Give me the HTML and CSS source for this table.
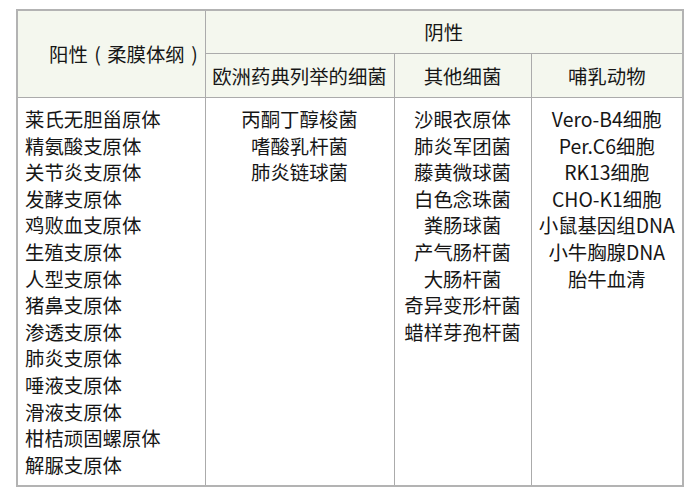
FILE: index.html
```html
<!DOCTYPE html>
<html lang="zh">
<head>
<meta charset="utf-8">
<link rel="stylesheet" href="styles.css">
</head>
<body>
<table class="grid">
  <colgroup>
    <col class="c1"><col class="c2"><col class="c3"><col class="c4">
  </colgroup>
  <thead>
    <tr class="h1">
      <th rowspan="2" class="pos">阳性<span class="paren">(</span>柔膜体纲<span class="paren">)</span></th>
      <th colspan="3">阴性</th>
    </tr>
    <tr class="h2">
      <th>欧洲药典列举的细菌</th>
      <th>其他细菌</th>
      <th>哺乳动物</th>
    </tr>
  </thead>
  <tbody>
    <tr>
      <td class="left">
        <div>莱氏无胆甾原体</div>
        <div>精氨酸支原体</div>
        <div>关节炎支原体</div>
        <div>发酵支原体</div>
        <div>鸡败血支原体</div>
        <div>生殖支原体</div>
        <div>人型支原体</div>
        <div>猪鼻支原体</div>
        <div>渗透支原体</div>
        <div>肺炎支原体</div>
        <div>唾液支原体</div>
        <div>滑液支原体</div>
        <div>柑桔顽固螺原体</div>
        <div>解脲支原体</div>
      </td>
      <td class="mid">
        <div>丙酮丁醇梭菌</div>
        <div>嗜酸乳杆菌</div>
        <div>肺炎链球菌</div>
      </td>
      <td class="mid">
        <div>沙眼衣原体</div>
        <div>肺炎军团菌</div>
        <div>藤黄微球菌</div>
        <div>白色念珠菌</div>
        <div>粪肠球菌</div>
        <div>产气肠杆菌</div>
        <div>大肠杆菌</div>
        <div>奇异变形杆菌</div>
        <div>蜡样芽孢杆菌</div>
      </td>
      <td class="mid">
        <div>Vero-B4细胞</div>
        <div>Per.C6细胞</div>
        <div>RK13细胞</div>
        <div>CHO-K1细胞</div>
        <div>小鼠基因组DNA</div>
        <div>小牛胸腺DNA</div>
        <div>胎牛血清</div>
      </td>
    </tr>
  </tbody>
</table>
</body>
</html>
```
FILE: styles.css
```css
html, body {
  margin: 0;
  padding: 0;
  background: #ffffff;
}
body {
  padding: 9px 0 0 16px;
  font-family: "Noto Sans CJK SC", "Noto Sans", sans-serif;
  color: #161616;
}
.grid {
  border-collapse: collapse;
  width: 668px;
  border: 2px solid #b3b3b3;
  font-size: 19.4px;
}
.c1 { width: 188px; }
.c2 { width: 189px; }
.c3 { width: 137px; }
.c4 { width: 152px; }
.grid th, .grid td {
  border: 1px solid #ababab;
  padding: 0;
}
.grid th {
  background: #f4f7ee;
  font-weight: normal;
  text-align: center;
  line-height: 26px;
  white-space: nowrap;
}
.h1 th { height: 42px; }
.h2 th { height: 43px; }
.grid th.pos {
  padding-left: 31px;
  text-align: left;
}
.paren {
  display: inline-block;
  width: 1em;
  text-align: center;
}
.grid td {
  vertical-align: top;
  line-height: 26.6px;
  padding-top: 8px;
  padding-bottom: 7px;
}
.grid td.left {
  padding-left: 7px;
  text-align: left;
}
.grid td.mid {
  text-align: center;
}
```
